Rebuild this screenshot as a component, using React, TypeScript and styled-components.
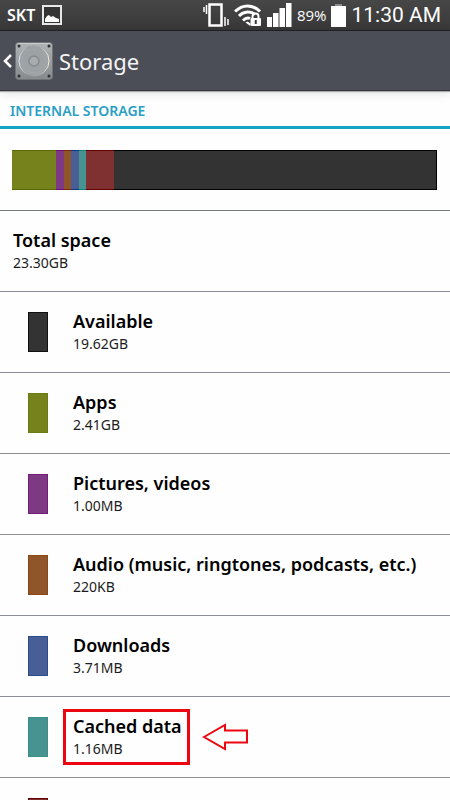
import React from "react";
import styled, { createGlobalStyle } from "styled-components";

const GlobalStyle = createGlobalStyle`
  *, *::before, *::after { box-sizing: border-box; }
  html, body, #root { margin: 0; height: 100%; }
  body {
    overflow: hidden;
    background: #fefefe;
    color: #000;
    font-family: "Noto Sans", "Open Sans", sans-serif;
  }
`;

const Screen = styled.div`
  display: flex;
  flex-direction: column;
  height: 100vh;
  overflow: hidden;
`;

const StatusBar = styled.header`
  flex: none;
  display: flex;
  align-items: center;
  justify-content: space-between;
  height: 31px;
  padding: 0 9px 0 7px;
  background: linear-gradient(#474747, #383838);
  border-bottom: 1px solid #222;
  color: #fff;
`;

const StatusGroup = styled.div`
  display: flex;
  align-items: center;
  gap: 5px;
  svg { display: block; flex: none; }
`;

const Carrier = styled.span`
  margin-right: 2px;
  font: 600 16px/32px "Noto Sans", sans-serif;
`;

const Percent = styled.span`
  font: 400 15px/32px "Open Sans", sans-serif;
`;

const Clock = styled.time`
  font: 400 21px/32px Roboto, sans-serif;
`;

const TitleBar = styled.nav`
  flex: none;
  position: relative;
  display: flex;
  align-items: center;
  height: 60px;
  padding: 0 2px;
  background: #4b4e57;
  border-bottom: 1px solid #34363d;
  box-shadow: 0 1px 1px #aaa, 0 2px 10px rgba(0, 0, 0, 0.12);
`;

const BackButton = styled.button`
  display: flex;
  align-items: center;
  gap: 2px;
  padding: 0;
  border: 0;
  background: none;
`;

const Title = styled.h1`
  margin: 0 0 0 6px;
  color: #f4f4f4;
  font: 400 22px/32px "Noto Sans", sans-serif;
`;

const SectionTitle = styled.h2`
  flex: none;
  margin: 0;
  height: 38px;
  padding: 0 10px;
  border-bottom: 3px solid #14a5c4;
  color: #2a9fc6;
  font: 600 14px/40px "Noto Sans", sans-serif;
`;

const UsagePanel = styled.div`
  flex: none;
  padding: 21px 13px 20px 12px;
  border-bottom: 1px solid #747a82;
`;

const UsageBar = styled.div`
  display: flex;
  height: 40px;
`;

const Segment = styled.div<{ $color: string; $edge: string; $share: number }>`
  flex: ${(p) => p.$share} 1 0;
  background: ${(p) => p.$color};
  border: solid ${(p) => p.$edge};
  border-width: 1px 0;
  &:last-child { border-right-width: 1px; }
`;

const List = styled.ul`
  margin: 0;
  padding: 0;
  list-style: none;
`;

const Row = styled.li`
  display: flex;
  align-items: center;
  height: 81px;
  padding: 0 13px;
  border-bottom: 1px solid #8b8f95;
`;

const Swatch = styled.span<{ $color: string; $edge: string }>`
  flex: none;
  width: 20px;
  height: 40px;
  margin: 0 25px 0 15px;
  background: ${(p) => p.$color};
  border: 1px solid ${(p) => p.$edge};
`;

const Entry = styled.div`
  position: relative;
  white-space: nowrap;
`;

const Name = styled.div`
  font: 600 18px/24px "Noto Sans", sans-serif;
`;

const Size = styled.div`
  color: #1c1c1c;
  font: 400 14px/22px "Noto Sans", sans-serif;
`;

const Highlight = styled.span`
  position: absolute;
  inset: -5px -8px -5px -10px;
  border: 3px solid #ec0610;
`;

const Pointer = styled.svg`
  position: absolute;
  left: calc(100% + 20px);
  top: 9px;
`;

const VibrateIcon = () => (
  <svg width="26" height="26" viewBox="0 0 26 26" fill="none" stroke="#fff">
    <rect x="6.500" y="2.500" width="12" height="21" strokeWidth="2.500" />
    <path d="M1 5v5M3.500 3v9M22 15v9M25 17v6" strokeWidth="1.500" />
  </svg>
);

const WifiIcon = () => (
  <svg width="28" height="24" viewBox="0 0 28 24" fill="none" stroke="#fff">
    <path d="M1 8.500C8.500 1 18.500 1 26 8.500" strokeWidth="3" />
    <path d="M5 13C10 8 17 8 21 11.500" strokeWidth="3" />
    <path d="M9 17.500C11 15.500 14 14.500 16 15.500" strokeWidth="3" />
    <path d="M13.500 18.500l3 2v2h-1l-4-3z" fill="#fff" stroke="none" />
    <path d="M18.500 15v-1.500a3 3 0 0 1 6 0V15" strokeWidth="2" />
    <rect x="16.500" y="15" width="10.500" height="8" rx="1" fill="#fff" stroke="none" />
    <path d="M21.750 17v4" stroke="#3b3b3b" strokeWidth="2" />
  </svg>
);

const SignalIcon = () => (
  <svg width="25" height="24" viewBox="0 0 25 24" fill="#fff">
    <path d="M0 14h5v10H0zM6 10h5.500v14H6zM12.500 5H18v19h-5.500zM19 0h5.500v24H19z" />
  </svg>
);

const BatteryIcon = () => (
  <svg width="15" height="23" viewBox="0 0 15 23">
    <path d="M0 2h15v21H0z" fill="#fff" />
    <path d="M4 0h7v2H4z" fill="#8b8b8b" />
  </svg>
);

const PictureIcon = () => (
  <svg width="20" height="20" viewBox="0 0 20 20">
    <rect x="1" y="1" width="18" height="18" fill="#343434" stroke="#e8e8e8" strokeWidth="2" />
    <path d="M3 17v-3l2-3 2-1 2 2 2-1 3 2 3 1v3z" fill="#fff" />
  </svg>
);

const ChevronIcon = () => (
  <svg width="11" height="16" viewBox="0 0 11 16">
    <path d="M9 2L3 8l6 6" fill="none" stroke="#fff" strokeWidth="2.500" />
  </svg>
);

const DiskIcon = () => (
  <svg width="38" height="38" viewBox="0 0 38 38">
    <defs>
      <linearGradient id="plate" x1="0" y1="0" x2="0" y2="1">
        <stop offset="0" stopColor="#b1b4b5" />
        <stop offset="1" stopColor="#858a8d" />
      </linearGradient>
      <linearGradient id="ring" x1="0" y1="0" x2="1" y2="0">
        <stop offset="0" stopColor="#d5edf1" />
        <stop offset="0.300" stopColor="#969a9c" />
        <stop offset="0.700" stopColor="#a6aaab" />
        <stop offset="1" stopColor="#f4eddc" />
      </linearGradient>
    </defs>
    <rect x="0.500" y="0.500" width="37" height="37" rx="3" fill="url(#plate)" stroke="#6f7376" />
    <path d="M3 1.500h32" stroke="#ccc" />
    <circle cx="19" cy="19" r="15" fill="#9da2a4" stroke="url(#ring)" strokeWidth="1" />
    <circle cx="19" cy="19" r="12" fill="none" stroke="#a4a8aa" />
    <circle cx="19" cy="19" r="5" fill="#a9acae" stroke="#858a8d" strokeWidth="1.500" />
    <g fill="#2f3236">
      <circle cx="4" cy="4" r="1.500" />
      <circle cx="34" cy="4" r="1.500" />
      <circle cx="4" cy="34" r="1.500" />
      <circle cx="34" cy="34" r="1.500" />
    </g>
  </svg>
);

const segments = [
  { color: "#76821c", edge: "#5a6a00", share: 44 },
  { color: "#7d3a82", edge: "#6e0b76", share: 8 },
  { color: "#90562a", edge: "#7d2600", share: 7 },
  { color: "#475f95", edge: "#0b3585", share: 8 },
  { color: "#479391", edge: "#118079", share: 7 },
  { color: "#7f3030", edge: "#670000", share: 28 },
  { color: "#333333", edge: "#000000", share: 323 },
];

const categories = [
  { name: "Available", size: "19.62GB", color: "#333333", edge: "#111111" },
  { name: "Apps", size: "2.41GB", color: "#76821c", edge: "#6c7a12" },
  { name: "Pictures, videos", size: "1.00MB", color: "#7d3a82", edge: "#741c7c" },
  { name: "Audio (music, ringtones, podcasts, etc.)", size: "220KB", color: "#90562a", edge: "#8a4818" },
  { name: "Downloads", size: "3.71MB", color: "#475f95", edge: "#2b4b90" },
  { name: "Cached data", size: "1.16MB", color: "#479391", edge: "#3c8f8b", marked: true },
];

export default function App() {
  return (
    <>
      <GlobalStyle />
      <Screen>
        <StatusBar>
          <StatusGroup>
            <Carrier>SKT</Carrier>
            <PictureIcon />
          </StatusGroup>
          <StatusGroup>
            <VibrateIcon />
            <WifiIcon />
            <SignalIcon />
            <Percent>89%</Percent>
            <BatteryIcon />
            <Clock>11:30 AM</Clock>
          </StatusGroup>
        </StatusBar>
        <TitleBar>
          <BackButton aria-label="Back">
            <ChevronIcon />
            <DiskIcon />
          </BackButton>
          <Title>Storage</Title>
        </TitleBar>
        <SectionTitle>INTERNAL STORAGE</SectionTitle>
        <UsagePanel>
          <UsageBar>
            {segments.map((s) => (
              <Segment key={s.color} $color={s.color} $edge={s.edge} $share={s.share} />
            ))}
          </UsageBar>
        </UsagePanel>
        <List>
          <Row>
            <Entry>
              <Name>Total space</Name>
              <Size>23.30GB</Size>
            </Entry>
          </Row>
          {categories.map((c) => (
            <Row key={c.name}>
              <Swatch $color={c.color} $edge={c.edge} />
              <Entry>
                <Name>{c.name}</Name>
                <Size>{c.size}</Size>
                {c.marked && (
                  <>
                    <Highlight />
                    <Pointer width="47" height="28" viewBox="0 0 47 28" fill="none" stroke="#ec0610" strokeWidth="2">
                      <path d="M2 14L23 2v5.500h22v12H23V26z" />
                    </Pointer>
                  </>
                )}
              </Entry>
            </Row>
          ))}
          <Row>
            <Swatch $color="#7f3030" $edge="#670000" />
          </Row>
        </List>
      </Screen>
    </>
  );
}
